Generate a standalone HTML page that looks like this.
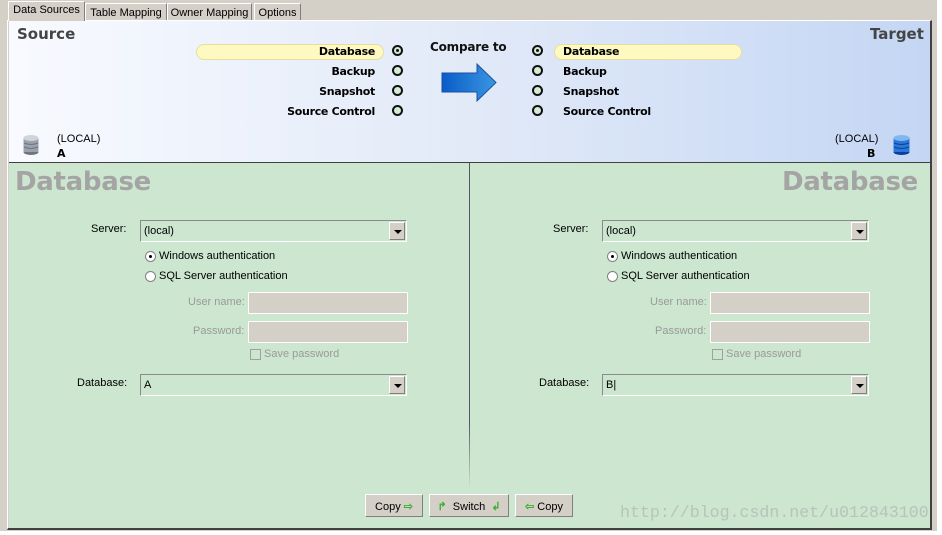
<!DOCTYPE html>
<html><head><meta charset="utf-8"><style>
*{margin:0;padding:0;box-sizing:border-box}
body{width:942px;height:535px;overflow:hidden;background:#fff;font-family:"Liberation Sans",sans-serif;font-size:11px;position:relative}
.a{position:absolute}
.tab{position:absolute;top:3px;height:18px;border:1px solid #808080;border-bottom:none;background:#d4d0c8;font-size:11px;padding:2px 0;text-align:center;white-space:nowrap;border-top-color:#fff;border-left-color:#fff}
.b{font-weight:bold;white-space:nowrap;font-family:"DejaVu Sans",sans-serif;font-size:11px}
.rad{position:absolute;width:11px;height:11px;border:2px solid #111;border-radius:50%;background:#d4ecd4}
.rad.on::after{content:"";position:absolute;left:2px;top:2px;width:3px;height:3px;background:#111;border-radius:50%}
.pill{position:absolute;height:16px;background:#fdf9c0;border:1px solid #e6dea0;border-radius:8px}
.lbl{position:absolute;font-size:11px;color:#000;text-align:right;white-space:nowrap}
.gl{color:#9a9a9a}
.cb{position:absolute;height:22px;border:1px solid #8a8a8a;border-right-color:#fff;border-bottom-color:#fff;background:#cce6cf;font-size:11px;padding:4px 3px}
.cb i{position:absolute;right:1px;top:1px;width:16px;height:18px;background:#d4d0c8;border:1px solid;border-color:#fff #808080 #808080 #fff}
.cb i::after{content:"";position:absolute;left:4px;top:7px;border:4px solid transparent;border-top:4px solid #000;border-bottom:0}
.tb{position:absolute;height:22px;background:#d4d0c8;border:1px solid #fff}
.sr{position:absolute;width:11px;height:11px;border-radius:50%;border:1px solid #808080;background:#fff}
.big{position:absolute;font-family:"DejaVu Sans",sans-serif;font-weight:bold;font-size:26px;color:#a4a4a4;letter-spacing:-0.3px}
.btn{position:absolute;top:494px;height:23px;background:#d4d0c8;border:1px solid #808080;border-top-color:#fff;border-left-color:#fff;font-size:11px;padding:5px 0;text-align:center}
.ar{color:#3cb034;font-weight:bold}
</style></head><body>
<div class="a" style="left:0;top:0;width:942px;height:535px;background:#d4d0c8"></div>
<div class="a" style="left:937px;top:0;width:5px;height:535px;background:#fff"></div>
<div class="a" style="left:0;top:531px;width:942px;height:4px;background:#fff"></div>
<div class="tab" style="left:8px;top:1px;height:20px;width:77px;z-index:2">Data Sources</div>
<div class="tab" style="left:85px;width:82px;padding-top:3px">Table Mapping</div>
<div class="tab" style="left:167px;width:85px;padding-top:3px">Owner Mapping</div>
<div class="tab" style="left:254px;width:47px;padding-top:3px">Options</div>
<div class="a" style="left:7px;top:20px;width:925px;height:510px;border-left:1px solid #fff;border-top:1px solid #fff;border-right:2px solid #404040;border-bottom:2px solid #404040"></div>
<div class="a" style="left:9px;top:21px;width:921px;height:141px;background:linear-gradient(90deg,#f8faff 0%,#e2eaf8 50%,#c4d6f4 100%)"></div>
<div class="a" style="left:9px;top:162px;width:921px;height:1px;background:#404040"></div>
<div class="a" style="left:9px;top:163px;width:921px;height:365px;background:#cce6cf"></div>
<div class="a" style="left:469px;top:163px;width:1px;height:325px;background:linear-gradient(#556 0%,#556 80%,#cce6cf 100%)"></div>
<div class="a b" style="left:17px;top:25px;font-size:15px;color:#444">Source</div>
<div class="a b" style="left:870px;top:25px;font-size:15px;color:#444">Target</div>
<div class="pill" style="left:196px;top:44px;width:188px"></div>
<div class="pill" style="left:554px;top:44px;width:188px"></div>
<div class="lbl b" style="right:567px;top:45px;letter-spacing:-0.3px">Database</div>
<div class="lbl b" style="right:567px;top:65px;letter-spacing:-0.3px">Backup</div>
<div class="lbl b" style="right:567px;top:85px;letter-spacing:-0.3px">Snapshot</div>
<div class="lbl b" style="right:567px;top:105px;letter-spacing:-0.3px">Source Control</div>
<div class="rad on" style="left:392px;top:45px"></div>
<div class="rad" style="left:392px;top:65px"></div>
<div class="rad" style="left:392px;top:85px"></div>
<div class="rad" style="left:392px;top:105px"></div>
<div class="a b" style="left:430px;top:40px;font-size:12px;color:#111;letter-spacing:-0.2px">Compare to</div>
<svg class="a" style="left:440px;top:62px" width="60" height="42"><defs><linearGradient id="g" x1="0" x2="1"><stop offset="0" stop-color="#0a5cc8"/><stop offset="1" stop-color="#3a96e0"/></linearGradient></defs><path d="M2 11H37V2L56 20.5L37 39V30H2Z" fill="url(#g)" stroke="#1a4fa0" stroke-width="1"/></svg>
<div class="rad on" style="left:532px;top:45px"></div>
<div class="rad" style="left:532px;top:65px"></div>
<div class="rad" style="left:532px;top:85px"></div>
<div class="rad" style="left:532px;top:105px"></div>
<div class="lbl b" style="left:563px;top:45px;letter-spacing:-0.3px">Database</div>
<div class="lbl b" style="left:563px;top:65px;letter-spacing:-0.3px">Backup</div>
<div class="lbl b" style="left:563px;top:85px;letter-spacing:-0.3px">Snapshot</div>
<div class="lbl b" style="left:563px;top:105px;letter-spacing:-0.3px">Source Control</div>
<svg class="a" style="left:23px;top:134px" width="16" height="22"><ellipse cx="8" cy="18" rx="7.5" ry="3" fill="#6e7480"/><rect x="0.5" y="4" width="15" height="14" fill="#9ca2ac"/><ellipse cx="8" cy="4" rx="7.5" ry="3" fill="#d0d4da"/><path d="M1 9Q8 12 15 9M1 13Q8 16 15 13" stroke="#6e7480" fill="none"/></svg>
<div class="a" style="left:57px;top:133px;font-size:11px">(LOCAL)</div>
<div class="a b" style="left:57px;top:147px">A</div>
<svg class="a" style="left:893px;top:134px" width="17" height="22"><ellipse cx="8.5" cy="18" rx="8" ry="3" fill="#0b3f9a"/><rect x="0.5" y="4" width="16" height="14" fill="#2c78d8"/><ellipse cx="8.5" cy="4" rx="8" ry="3" fill="#7fb8f0"/><path d="M1 9Q8.5 12 16 9M1 13Q8.5 16 16 13" stroke="#0b3f9a" fill="none"/></svg>
<div class="a" style="left:835px;top:133px;font-size:11px">(LOCAL)</div>
<div class="a b" style="left:867px;top:147px">B</div>
<div class="big" style="left:15px;top:167px">Database</div>
<div class="big" style="left:782px;top:167px">Database</div>
<div class="lbl" style="left:91px;top:223px">Server:</div>
<div class="cb" style="left:140px;top:220px;width:267px">(local)<i></i></div>
<div class="sr" style="left:145px;top:251px"><span style="position:absolute;left:3px;top:3px;width:3px;height:3px;background:#000;border-radius:50%"></span></div>
<div class="lbl" style="left:159px;top:250px">Windows authentication</div>
<div class="sr" style="left:145px;top:271px"></div>
<div class="lbl" style="left:159px;top:270px">SQL Server authentication</div>
<div class="lbl gl" style="left:188px;top:296px">User name:</div>
<div class="tb" style="left:248px;top:292px;width:160px"></div>
<div class="lbl gl" style="left:193px;top:325px">Password:</div>
<div class="tb" style="left:248px;top:321px;width:160px"></div>
<div class="a" style="left:250px;top:349px;width:11px;height:11px;border:1px solid #a0a0a0"></div>
<div class="lbl gl" style="left:264px;top:348px">Save password</div>
<div class="lbl" style="left:77px;top:377px">Database:</div>
<div class="cb" style="left:140px;top:374px;width:267px">A<i></i></div>
<div class="lbl" style="left:553px;top:223px">Server:</div>
<div class="cb" style="left:602px;top:220px;width:267px">(local)<i></i></div>
<div class="sr" style="left:607px;top:251px"><span style="position:absolute;left:3px;top:3px;width:3px;height:3px;background:#000;border-radius:50%"></span></div>
<div class="lbl" style="left:621px;top:250px">Windows authentication</div>
<div class="sr" style="left:607px;top:271px"></div>
<div class="lbl" style="left:621px;top:270px">SQL Server authentication</div>
<div class="lbl gl" style="left:650px;top:296px">User name:</div>
<div class="tb" style="left:710px;top:292px;width:160px"></div>
<div class="lbl gl" style="left:655px;top:325px">Password:</div>
<div class="tb" style="left:710px;top:321px;width:160px"></div>
<div class="a" style="left:712px;top:349px;width:11px;height:11px;border:1px solid #a0a0a0"></div>
<div class="lbl gl" style="left:726px;top:348px">Save password</div>
<div class="lbl" style="left:539px;top:377px">Database:</div>
<div class="cb" style="left:602px;top:374px;width:267px">B|<i></i></div>
<div class="btn" style="left:365px;width:58px">Copy <span class="ar">&#x21E8;</span></div>
<div class="btn" style="left:429px;width:80px"><span class="ar">&#x21B1;</span>&nbsp; Switch &nbsp;<span class="ar">&#x21B2;</span></div>
<div class="btn" style="left:515px;width:58px"><span class="ar">&#x21E6;</span> Copy</div>
<div class="a" style="left:620px;top:503px;font-family:'Liberation Mono',monospace;font-size:16.6px;color:#b8c4b9;white-space:nowrap">http://blog.csdn.net/u012843100</div>
</body></html>
